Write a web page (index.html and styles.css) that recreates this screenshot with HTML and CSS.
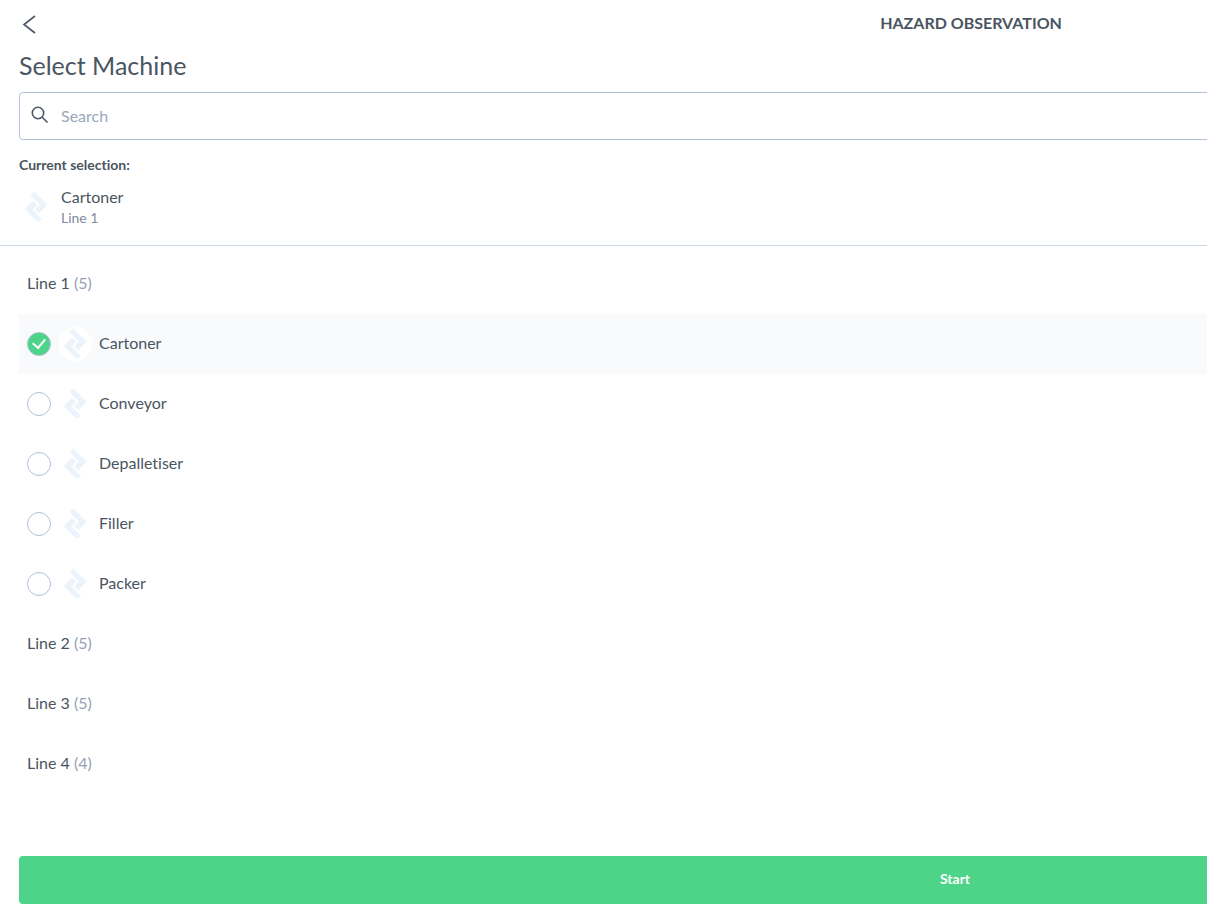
FILE: index.html
```html
<!DOCTYPE html>
<html lang="en">
<head>
  <meta charset="UTF-8">
  <title>Hazard Observation</title>
  <link rel="stylesheet" href="styles.css">
</head>
<body>

  <svg class="sprite" aria-hidden="true">
    <symbol id="machine" viewBox="0 0 102 102">
      <path d="M46 5 L86 44 L60.5 69.5 L48.5 57.5 L62.5 43.5 L34 15 Z"/>
      <path d="M17 58 L42.5 32.5 L54.5 44.5 L40.5 58.5 L69 87 L57 97 Z"/>
    </symbol>
  </svg>

  <div class="page">
    <header class="topbar">
      <button class="back" type="button" aria-label="Back">
        <svg width="16" height="20" viewBox="0 0 16 20"><path d="M14 2 L3 10.5 L14 19"/></svg>
      </button>
      <h1>HAZARD OBSERVATION</h1>
    </header>

    <section class="picker">
      <h2>Select Machine</h2>
      <label class="search">
        <svg width="18" height="18" viewBox="0 0 18 18"><circle cx="7" cy="7" r="5.7"/><path d="M11.2 11.2 L16.5 16.5"/></svg>
        <input type="search" placeholder="Search" aria-label="Search">
      </label>
      <h3>Current selection:</h3>
      <div class="current">
        <svg class="machine-icon"><use href="#machine"/></svg>
        <div>
          <p class="current-name">Cartoner</p>
          <p class="current-line">Line 1</p>
        </div>
      </div>
    </section>

    <main class="lines">
      <details open>
        <summary>Line 1 <span>(5)</span></summary>
        <label class="machine">
          <input type="radio" name="machine" checked>
          <svg class="machine-icon"><use href="#machine"/></svg>
          <span class="machine-name">Cartoner</span>
        </label>
        <label class="machine">
          <input type="radio" name="machine">
          <svg class="machine-icon"><use href="#machine"/></svg>
          <span class="machine-name">Conveyor</span>
        </label>
        <label class="machine">
          <input type="radio" name="machine">
          <svg class="machine-icon"><use href="#machine"/></svg>
          <span class="machine-name">Depalletiser</span>
        </label>
        <label class="machine">
          <input type="radio" name="machine">
          <svg class="machine-icon"><use href="#machine"/></svg>
          <span class="machine-name">Filler</span>
        </label>
        <label class="machine">
          <input type="radio" name="machine">
          <svg class="machine-icon"><use href="#machine"/></svg>
          <span class="machine-name">Packer</span>
        </label>
      </details>
      <details>
        <summary>Line 2 <span>(5)</span></summary>
      </details>
      <details>
        <summary>Line 3 <span>(5)</span></summary>
      </details>
      <details>
        <summary>Line 4 <span>(4)</span></summary>
      </details>
    </main>

    <footer class="footer">
      <button class="start" type="submit">Start</button>
    </footer>
  </div>

</body>
</html>
```
FILE: styles.css
```css
* {
  margin: 0;
  padding: 0;
  box-sizing: border-box;
  font-family: Lato, "Liberation Sans", sans-serif;
  font-variant-ligatures: none;
}

body {
  background: #fff;
  color: #4a5561;
  font-size: 16px;
  overflow: hidden;
}

.sprite {
  display: none;
}

/* the sheet is wider than the viewport and runs off to the right */
.page {
  width: 158vw;
  min-height: 100vh;
  display: flex;
  flex-direction: column;
}

.topbar {
  display: flex;
  align-items: center;
  height: 48px;
  padding-left: 19px;
}

.back {
  width: 16px;
  height: 20px;
  border: none;
  background: none;
  cursor: pointer;
}

.back svg {
  display: block;
  margin-left: 2px;
}

.back path,
.search svg {
  fill: none;
  stroke: #4a5568;
  stroke-width: 1.6;
}

h1 {
  flex: 1;
  padding-bottom: 2px;
  text-align: center;
  font-size: 16px;
  line-height: 46px;
  font-weight: 700;
}

.picker {
  padding: 0 16px 16px 19px;
  border-bottom: 1px solid #cbd9e6;
}

h2 {
  font-size: 25px;
  line-height: 34px;
  font-weight: 400;
  margin-bottom: 10px;
}

.search {
  display: flex;
  align-items: center;
  gap: 12px;
  height: 48px;
  padding: 0 11px 2px;
  border: 1px solid #b0c1d9;
  border-radius: 4px;
}

.search input {
  flex: 1;
  border: none;
  outline: none;
  background: none;
  font-size: 16px;
  color: #4a5561;
}

.search input::placeholder {
  color: #9aa8bb;
}

h3 {
  font-size: 14px;
  line-height: 20px;
  font-weight: 700;
  margin-top: 15px;
}

.current {
  display: flex;
  align-items: center;
  gap: 8px;
  margin-top: 11px;
  margin-bottom: 1px;
}

.machine-icon {
  width: 34px;
  height: 34px;
  border-radius: 50%;
  background: #fff;
  fill: #ebf4fc;
}

.current-name {
  line-height: 22px;
}

.current-line {
  font-size: 14px;
  line-height: 20px;
  color: #7f8da1;
}

.lines {
  padding: 8px 16px 0 19px;
}

summary {
  list-style: none;
  padding: 0 0 2px 8px;
  line-height: 58px;
  cursor: pointer;
}

summary span {
  color: #94a1b5;
}

.machine {
  display: flex;
  align-items: center;
  gap: 7px;
  height: 60px;
  padding-left: 8px;
  cursor: pointer;
}

.machine:has(input:checked) {
  background: #f8fafc;
}

.machine input {
  appearance: none;
  display: grid;
  place-items: center;
  width: 24px;
  height: 24px;
  border: 1px solid #b0c1de;
  border-radius: 50%;
  background: #fff;
}

.machine input:checked {
  background: #4ed488;
}

.machine input:checked::after {
  content: "";
  width: 6px;
  height: 10px;
  margin-bottom: 4px;
  border: solid #fff;
  border-width: 0 2px 2px 0;
  transform: rotate(40deg);
}

.machine-name {
  padding-bottom: 4px;
}

.footer {
  margin-top: auto;
  padding: 0 16px 1px 19px;
}

.start {
  display: block;
  width: 100%;
  height: 48px;
  padding-bottom: 3px;
  border: none;
  border-radius: 4px;
  background: #4ed488;
  color: #fff;
  font-size: 14px;
  font-weight: 700;
  cursor: pointer;
}
```
